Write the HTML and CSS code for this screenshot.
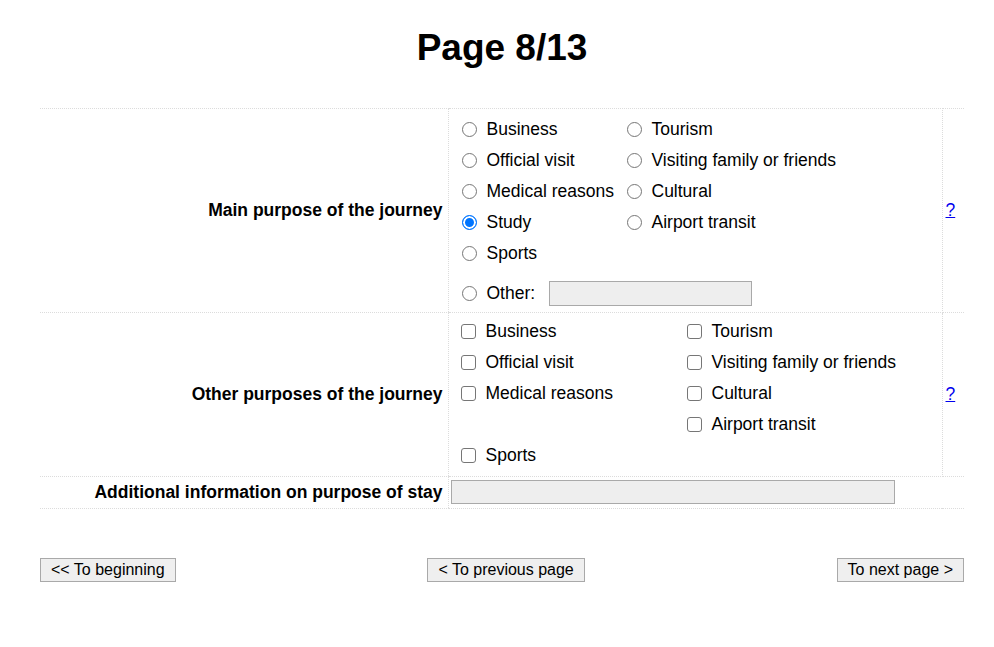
FILE: index.html
```html
<!DOCTYPE html>
<html lang="en">
<head>
<meta charset="utf-8">
<title>Page 8/13</title>
<link rel="stylesheet" href="styles.css">
</head>
<body>
<div class="page">
  <h1 class="title">Page 8/13</h1>
  <table class="form">
    <colgroup>
      <col class="col-label">
      <col class="col-field">
      <col class="col-help">
    </colgroup>
    <tr>
      <th class="label">Main purpose of the journey</th>
      <td class="field field-main">
        <div class="opts radios">
          <label class="opt"><input type="radio" name="main">Business</label>
          <label class="opt"><input type="radio" name="main">Tourism</label>
          <label class="opt"><input type="radio" name="main">Official visit</label>
          <label class="opt"><input type="radio" name="main">Visiting family or friends</label>
          <label class="opt"><input type="radio" name="main">Medical reasons</label>
          <label class="opt"><input type="radio" name="main">Cultural</label>
          <label class="opt"><input type="radio" name="main" checked>Study</label>
          <label class="opt"><input type="radio" name="main">Airport transit</label>
          <label class="opt"><input type="radio" name="main">Sports</label>
          <span class="opt"></span>
        </div>
        <div class="other">
          <label class="opt"><input type="radio" name="main">Other:</label>
          <input type="text" class="text other-text">
        </div>
      </td>
      <td class="help"><a href="#">?</a></td>
    </tr>
    <tr>
      <th class="label">Other purposes of the journey</th>
      <td class="field field-other">
        <div class="opts checks">
          <label class="opt"><input type="checkbox">Business</label>
          <label class="opt"><input type="checkbox">Tourism</label>
          <label class="opt"><input type="checkbox">Official visit</label>
          <label class="opt"><input type="checkbox">Visiting family or friends</label>
          <label class="opt"><input type="checkbox">Medical reasons</label>
          <label class="opt"><input type="checkbox">Cultural</label>
          <span class="opt"></span>
          <label class="opt"><input type="checkbox">Airport transit</label>
          <label class="opt"><input type="checkbox">Sports</label>
          <span class="opt"></span>
        </div>
      </td>
      <td class="help"><a href="#">?</a></td>
    </tr>
    <tr>
      <th class="label">Additional information on purpose of stay</th>
      <td class="field field-info" colspan="2">
        <input type="text" class="text info-text">
      </td>
    </tr>
  </table>
  <div class="nav">
    <button type="button" class="btn">&lt;&lt; To beginning</button>
    <button type="button" class="btn">&lt; To previous page</button>
    <button type="button" class="btn">To next page &gt;</button>
  </div>
</div>
</body>
</html>
```
FILE: styles.css
```css
html, body {
  margin: 0;
  padding: 0;
  background: #ffffff;
}

body {
  font-family: "Liberation Sans", Arial, sans-serif;
  font-size: 17.5px;
  color: #000000;
}

.page {
  width: 924px;
  margin-left: 40px;
}

.title {
  margin: 27px 0 0 0;
  font-size: 37px;
  font-weight: bold;
  text-align: center;
  line-height: 41px;
}

.form {
  margin-top: 40px;
  width: 924px;
  border-collapse: collapse;
  table-layout: fixed;
}

.col-label { width: 408px; }
.col-field { width: 494px; }
.col-help { width: 22px; }

.form th,
.form td {
  border-top: 1px dotted #dcdcdc;
  border-bottom: 1px dotted #dcdcdc;
  padding: 0;
  vertical-align: middle;
}

.label {
  text-align: right;
  font-weight: bold;
  padding-right: 5px !important;
  white-space: nowrap;
}

.field {
  border-left: 1px dotted #dcdcdc;
  border-right: 1px dotted #dcdcdc;
  text-align: left;
}

.field-main {
  padding: 5px 0 0 14px !important;
}

.field-other {
  padding: 3px 0 5px 13px !important;
}

.form .field-info {
  padding: 3px 0 4px 2px;
  border-right: none;
}

.opts {
  display: grid;
}

.radios {
  grid-template-columns: 165px auto;
}

.checks {
  grid-template-columns: 226px auto;
}

.opt {
  display: flex;
  align-items: center;
  height: 31px;
  white-space: nowrap;
}

.opt input {
  -webkit-appearance: none;
  appearance: none;
  box-sizing: border-box;
  margin: 0 10px 0 -1px;
  width: 15px;
  height: 15px;
  border: 1px solid #767676;
  background: #ffffff;
  flex: none;
}

.opt input[type="radio"] {
  border-radius: 50%;
}

.opt input[type="radio"]:checked {
  border-color: #0075ff;
  background: #0075ff;
  box-shadow: inset 0 0 0 2px #ffffff;
}

.opt input[type="checkbox"] {
  border-radius: 3px;
}

.other {
  display: flex;
  align-items: center;
  height: 38px;
  margin-top: 5px;
}

.text {
  box-sizing: border-box;
  height: 25px;
  background: #eeeeee;
  border: 1px solid #a9a9a9;
  border-radius: 0;
  margin: 0;
  padding: 1px 2px;
  font-family: inherit;
  font-size: 16px;
}

.other-text {
  width: 203px;
  margin-left: 14px;
}

.info-text {
  width: 444px;
  height: 24px;
  display: block;
}

.help {
  padding-left: 3px !important;
}

.help a {
  color: #0000ee;
  text-decoration: underline;
}

.nav {
  display: flex;
  justify-content: space-between;
  margin-top: 49px;
}

.btn {
  font-family: "Liberation Sans", Arial, sans-serif;
  font-size: 16px;
  color: #000000;
  background: #efefef;
  border: 1px solid #a9a9a9;
  border-radius: 0;
  height: 24px;
  padding: 0 10px;
  margin: 0;
  line-height: 20px;
}
```
